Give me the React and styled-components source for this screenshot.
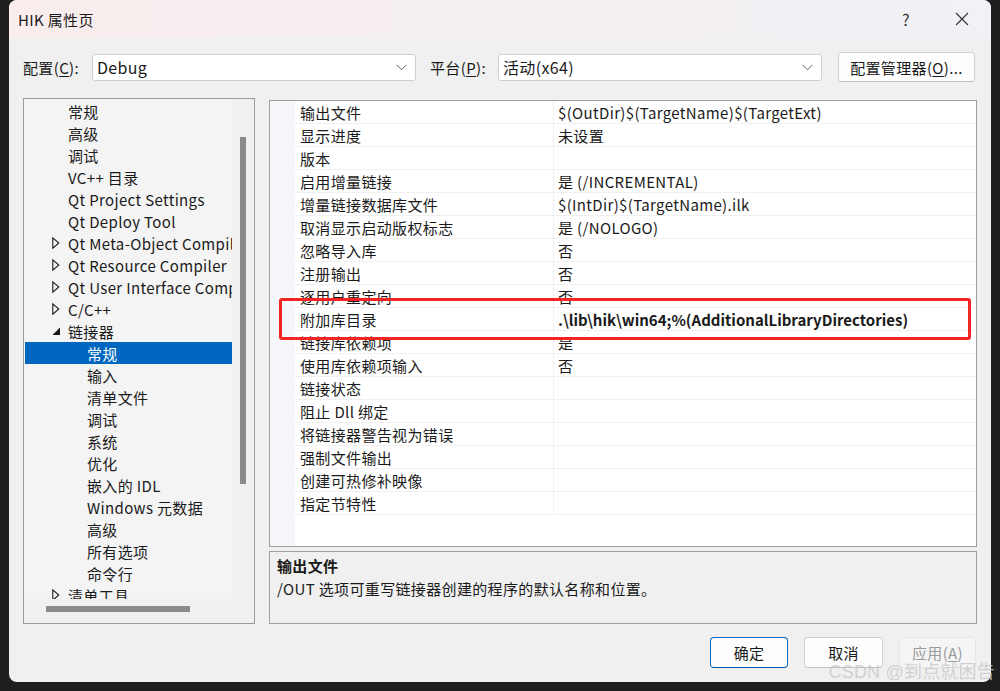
import React from 'react';
import styled, { createGlobalStyle } from 'styled-components';

const GlobalStyle = createGlobalStyle`
  html, body {
    margin: 0;
    padding: 0;
    background: #1f1f1f;
  }
  * {
    box-sizing: border-box;
  }
`;

const FONT = `"Noto Sans CJK SC", "Noto Sans", sans-serif`;

const Page = styled.div`
  width: 1000px;
  height: 691px;
  background: #1f1f1f;
  padding-left: 9px;
  overflow: hidden;
  position: relative;
  font-family: ${FONT};
  font-size: 15px;
  letter-spacing: 0.35px;
  color: #1a1a1a;
`;

const Dialog = styled.div`
  width: 982px;
  height: 682px;
  background: #f0f0f0;
  border-radius: 8px;
  overflow: hidden;
  display: flex;
  flex-direction: column;
  position: relative;
`;

const TitleBar = styled.div`
  height: 38px;
  flex-shrink: 0;
  display: flex;
  align-items: center;
  padding-left: 9px;
  background: linear-gradient(90deg, #f9eded 0%, #f5eff2 50%, #f1f1f6 100%);
`;

const Title = styled.div`
  flex: 1;
  font-size: 15px;
  color: #1a1a1a;
`;

const TitleButton = styled.div`
  width: 46px;
  height: 38px;
  display: flex;
  align-items: center;
  justify-content: center;
  color: #333;
  font-size: 16px;
  margin-right: ${(p) => p.$mr || 0}px;
`;

const Body = styled.div`
  flex: 1;
  display: flex;
  flex-direction: column;
  padding: 14px 14px 14px 14px;
`;

const TopRow = styled.div`
  height: 30px;
  display: flex;
  align-items: center;
`;

const Label = styled.div`
  width: ${(p) => p.$w}px;
  flex-shrink: 0;
  font-size: 15px;
  margin-left: ${(p) => p.$ml || 0}px;
`;

const Combo = styled.div`
  width: 324px;
  height: 27px;
  background: #fff;
  border: 1px solid #cfcfcf;
  border-radius: 3px;
  display: flex;
  align-items: center;
  padding: 0 8px 0 4px;
  font-size: 16px;
  justify-content: space-between;
`;

const PushButton = styled.div`
  width: ${(p) => p.$w}px;
  height: ${(p) => p.$h || 31}px;
  margin-left: ${(p) => p.$ml || 0}px;
  background: ${(p) => (p.$disabled ? '#f5f5f5' : '#fdfdfd')};
  border: 1px solid ${(p) => (p.$primary ? '#0067c0' : p.$disabled ? '#e6e6e6' : '#d0d0d0')};
  border-bottom-color: ${(p) => (p.$primary ? '#0058a8' : p.$disabled ? '#e6e6e6' : '#c0c0c0')};
  border-radius: 4px;
  display: flex;
  align-items: center;
  justify-content: center;
  font-size: 15px;
  color: ${(p) => (p.$disabled ? '#9a9a9a' : '#1a1a1a')};
`;

const U = styled.span`
  text-decoration: underline;
  text-underline-offset: 2px;
`;

const Main = styled.div`
  margin-top: 16px;
  height: 526px;
  display: flex;
  gap: 14px;
`;

const TreePanel = styled.div`
  width: 232px;
  height: 526px;
  border: 1px solid #9a9aa2;
  background: #f0f0f0;
  display: grid;
  grid-template-columns: 208px 22px;
  grid-template-rows: 500px 24px;
`;

const TreeList = styled.div`
  background: #f4f4f4;
  overflow: hidden;
  padding-top: 1px;
  padding-left: 1px;
`;

const TreeRow = styled.div`
  height: 22px;
  display: flex;
  align-items: center;
  white-space: nowrap;
  position: relative;
  padding-left: ${(p) => (p.$level === 2 ? 62 : 43)}px;
  background: ${(p) => (p.$selected ? '#0067c0' : 'transparent')};
  color: ${(p) => (p.$selected ? '#fff' : '#1a1a1a')};
`;

const Arrow = styled.span`
  position: absolute;
  left: 27px;
  top: 5px;
  width: 10px;
  height: 12px;
  display: flex;
  align-items: center;
`;

const VScroll = styled.div`
  display: flex;
  justify-content: center;
  padding-top: 38px;
`;

const VThumb = styled.div`
  width: 6px;
  height: 347px;
  background: #8a8a8a;
`;

const HScroll = styled.div`
  grid-column: 1 / 3;
  padding: 7px 0 0 22px;
`;

const HThumb = styled.div`
  width: 144px;
  height: 6px;
  background: #8a8a8a;
`;

const RightCol = styled.div`
  flex: 1;
  display: flex;
  flex-direction: column;
  padding-top: 2px;
  gap: 4px;
`;

const Grid = styled.div`
  height: 447px;
  border: 1px solid #a0a0a0;
  background: #fff;
  position: relative;
  display: grid;
  grid-template-columns: 25px 1fr;
`;

const Margin = styled.div`
  background: #f6f7fb;
`;

const Rows = styled.div`
  display: flex;
  flex-direction: column;
`;

const PropRow = styled.div`
  height: 23px;
  display: grid;
  grid-template-columns: 258px 1fr;
  border-bottom: 1px solid #f0f0f0;
`;

const Cell = styled.div`
  display: flex;
  align-items: center;
  padding-left: ${(p) => (p.$value ? 4 : 5)}px;
  white-space: nowrap;
  overflow: hidden;
  font-weight: ${(p) => (p.$bold ? 700 : 400)};
  letter-spacing: ${(p) => (p.$bold ? 0 : 0.35)}px;
  border-left: ${(p) => (p.$value ? '1px solid #f0f0f0' : 'none')};
`;

const Highlight = styled.div`
  position: absolute;
  left: 9px;
  top: 197px;
  width: 692px;
  height: 42px;
  border: 3px solid #f52424;
  border-radius: 3px;
`;

const Desc = styled.div`
  height: 73px;
  border: 1px solid #a0a0a0;
  background: #f0f0f0;
  padding: 2px 7px;
  display: flex;
  flex-direction: column;
`;

const DescTitle = styled.div`
  font-weight: 700;
  height: 23px;
  display: flex;
  align-items: center;
`;

const DescText = styled.div`
  height: 23px;
  display: flex;
  align-items: center;
`;

const ButtonRow = styled.div`
  margin-top: 13px;
  display: flex;
  justify-content: flex-end;
  padding-right: 1px;
`;

const Watermark = styled.div`
  position: absolute;
  right: 5px;
  bottom: 8px;
  font-size: 18px;
  color: rgba(200, 200, 200, 0.8);
  font-family: "Liberation Sans", "Noto Sans CJK SC", sans-serif;
  letter-spacing: 0.2px;
`;

const Chevron = () => (
  <svg width="11" height="7" viewBox="0 0 11 7">
    <polyline points="0.5,0.8 5.5,5.8 10.5,0.8" fill="none" stroke="#606060" strokeWidth="1" />
  </svg>
);

const Collapsed = () => (
  <svg width="8" height="12" viewBox="0 0 8 12">
    <polygon points="0.8,0.8 6.8,6 0.8,11.2" fill="none" stroke="#1a1a1a" strokeWidth="1.1" />
  </svg>
);

const Expanded = () => (
  <svg width="9" height="9" viewBox="0 0 9 9">
    <polygon points="8,0.5 8,8 0.5,8" fill="#1a1a1a" />
  </svg>
);

const treeItems = [
  { t: '常规', l: 1 },
  { t: '高级', l: 1 },
  { t: '调试', l: 1 },
  { t: 'VC++ 目录', l: 1 },
  { t: 'Qt Project Settings', l: 1 },
  { t: 'Qt Deploy Tool', l: 1 },
  { t: 'Qt Meta-Object Compiler', l: 1, a: 'c' },
  { t: 'Qt Resource Compiler', l: 1, a: 'c' },
  { t: 'Qt User Interface Compiler', l: 1, a: 'c' },
  { t: 'C/C++', l: 1, a: 'c' },
  { t: '链接器', l: 1, a: 'e' },
  { t: '常规', l: 2, sel: true },
  { t: '输入', l: 2 },
  { t: '清单文件', l: 2 },
  { t: '调试', l: 2 },
  { t: '系统', l: 2 },
  { t: '优化', l: 2 },
  { t: '嵌入的 IDL', l: 2 },
  { t: 'Windows 元数据', l: 2 },
  { t: '高级', l: 2 },
  { t: '所有选项', l: 2 },
  { t: '命令行', l: 2 },
  { t: '清单工具', l: 1, a: 'c' },
  { t: 'XML 文档生成器', l: 1, a: 'c' },
];

const props = [
  ['输出文件', '$(OutDir)$(TargetName)$(TargetExt)'],
  ['显示进度', '未设置'],
  ['版本', ''],
  ['启用增量链接', '是 (/INCREMENTAL)'],
  ['增量链接数据库文件', '$(IntDir)$(TargetName).ilk'],
  ['取消显示启动版权标志', '是 (/NOLOGO)'],
  ['忽略导入库', '否'],
  ['注册输出', '否'],
  ['逐用户重定向', '否'],
  ['附加库目录', '.\\lib\\hik\\win64;%(AdditionalLibraryDirectories)', true],
  ['链接库依赖项', '是'],
  ['使用库依赖项输入', '否'],
  ['链接状态', ''],
  ['阻止 Dll 绑定', ''],
  ['将链接器警告视为错误', ''],
  ['强制文件输出', ''],
  ['创建可热修补映像', ''],
  ['指定节特性', ''],
];

export default function App() {
  return (
    <Page>
      <GlobalStyle />
      <Dialog>
        <TitleBar>
          <Title>HIK 属性页</Title>
          <TitleButton $mr={10}>?</TitleButton>
          <TitleButton $mr={6}>
            <svg width="14" height="14" viewBox="0 0 14 14">
              <path d="M1 1 L13 13 M13 1 L1 13" stroke="#333" strokeWidth="1.1" />
            </svg>
          </TitleButton>
        </TitleBar>
        <Body>
          <TopRow>
            <Label $w={69}>配置(<U>C</U>):</Label>
            <Combo>
              <span>Debug</span>
              <Chevron />
            </Combo>
            <Label $w={68} $ml={14}>平台(<U>P</U>):</Label>
            <Combo>
              <span>活动(x64)</span>
              <Chevron />
            </Combo>
            <PushButton $w={137} $h={30} $ml={16}>
              配置管理器(<U>O</U>)...
            </PushButton>
          </TopRow>
          <Main>
            <TreePanel>
              <TreeList>
                {treeItems.map((it, i) => (
                  <TreeRow key={i} $level={it.l} $selected={it.sel}>
                    {it.a && <Arrow>{it.a === 'c' ? <Collapsed /> : <Expanded />}</Arrow>}
                    {it.t}
                  </TreeRow>
                ))}
              </TreeList>
              <VScroll>
                <VThumb />
              </VScroll>
              <HScroll>
                <HThumb />
              </HScroll>
            </TreePanel>
            <RightCol>
              <Grid>
                <Margin />
                <Rows>
                  {props.map(([n, v, b], i) => (
                    <PropRow key={i}>
                      <Cell>{n}</Cell>
                      <Cell $value $bold={b}>{v}</Cell>
                    </PropRow>
                  ))}
                </Rows>
                <Highlight />
              </Grid>
              <Desc>
                <DescTitle>输出文件</DescTitle>
                <DescText>/OUT 选项可重写链接器创建的程序的默认名称和位置。</DescText>
              </Desc>
            </RightCol>
          </Main>
          <ButtonRow>
            <PushButton $w={78} $primary>确定</PushButton>
            <PushButton $w={79} $ml={16}>取消</PushButton>
            <PushButton $w={77} $ml={16} $disabled>应用(<U>A</U>)</PushButton>
          </ButtonRow>
        </Body>
      </Dialog>
      <Watermark>CSDN @到点就困告</Watermark>
    </Page>
  );
}
